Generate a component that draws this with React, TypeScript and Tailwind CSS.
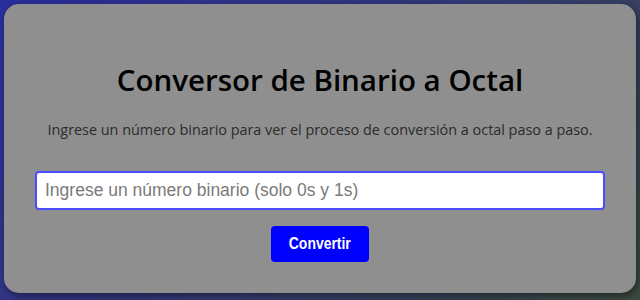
export default function App() {
  return (
    <main className="flex h-[300px] w-[640px] bg-[linear-gradient(135deg,#2a2e9e_0%,#343a78_50%,#3d4a3e_100%)] px-1 pt-1 pb-[7px]">
      <section className="flex flex-1 flex-col items-center rounded-[15px] bg-[#8f8f8f] px-[31px] pt-[58px] shadow-[2px_3px_8px_rgba(0,0,0,0.45)]">
        <h1 className="font-['Open_Sans',sans-serif] text-[29.5px] font-semibold leading-[36px] text-black">
          Conversor de Binario a Octal
        </h1>
        <p className="mt-[22px] font-['Open_Sans',sans-serif] text-[14.4px] leading-[20px] text-[#2b2b2b]">
          Ingrese un número binario para ver el proceso de conversión a octal paso a paso.
        </p>
        <input
          type="text"
          placeholder="Ingrese un número binario (solo 0s y 1s)"
          className="mt-[31px] h-[39px] w-full rounded-[4px] border-2 border-[#4b4bff] bg-white px-[8px] font-['Liberation_Sans',sans-serif] text-[17.5px] text-black outline-none placeholder:text-[#7a7a7a]"
        />
        <button className="mt-[16px] flex h-[36px] w-[98px] items-center justify-center rounded-[4px] bg-[#0000ff] font-['Liberation_Sans',sans-serif] text-[17px] font-bold text-white">
          <span className="inline-block scale-x-[0.82]">Convertir</span>
        </button>
      </section>
    </main>
  );
}
